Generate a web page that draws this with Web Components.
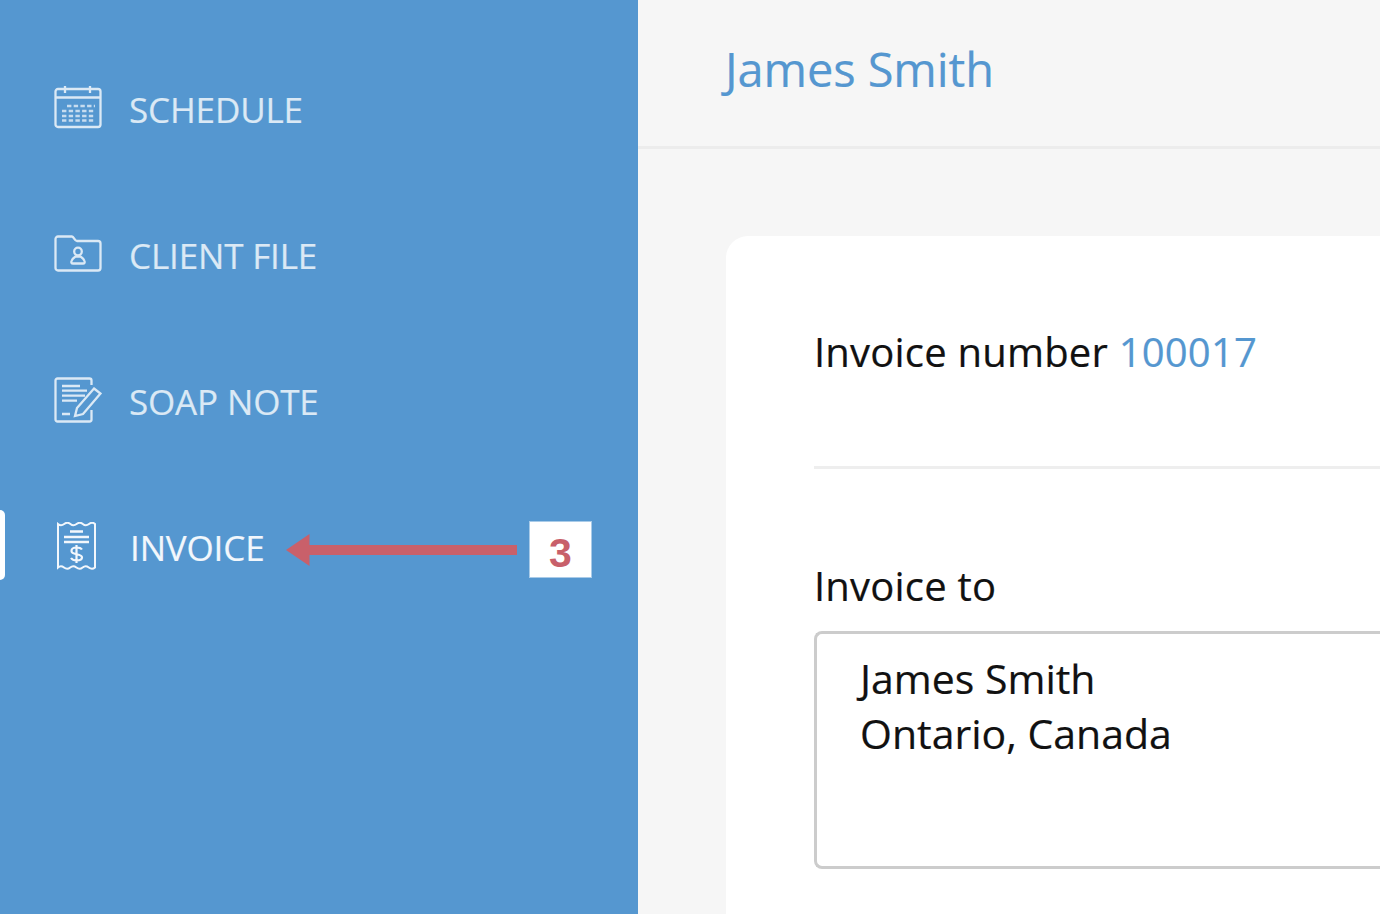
<!DOCTYPE html>
<html><head><meta charset="utf-8">
<style>
html,body{margin:0;height:100%;overflow:hidden}
body{font-family:"Open Sans",sans-serif;-webkit-text-stroke:.2px}
</style></head>
<body>
<app-shell>
  <side-nav slot="side">
    <nav-item label="SCHEDULE" icon="calendar"></nav-item>
    <nav-item label="CLIENT FILE" icon="folder"></nav-item>
    <nav-item label="SOAP NOTE" icon="note"></nav-item>
    <nav-item label="INVOICE" icon="receipt" active><call-out n="3"></call-out></nav-item>
  </side-nav>
  <page-header slot="main">James Smith</page-header>
  <invoice-card slot="main"></invoice-card>
</app-shell>
<script>
function def(name,html,init){
  customElements.define(name,class extends HTMLElement{
    constructor(){super();this.attachShadow({mode:'open'}).innerHTML=html;}
    connectedCallback(){if(init)init(this);}
  });
}
const ICONS={
calendar:`<svg width="48" height="44" viewBox="0 0 48 44" fill="none" stroke="#dbe9f5" stroke-width="2.300"><rect x="1.500" y="3" width="45" height="38" rx="2.500"/><path d="M1.500 11.500H46.500M11 0V7M36 0V7"/><g stroke-width="2.600" stroke-dasharray="4.400 2.300" opacity=".85"><path d="M13 20H41"/><path d="M8 25H41"/><path d="M8 30H41"/><path d="M8 34.500H41"/></g></svg>`,
folder:`<svg width="48" height="37" viewBox="0 0 48 37" fill="none" stroke="#dbe9f5" stroke-width="2.300"><path d="M1.500 4A2.500 2.500 0 0 1 4 1.500H18C20 1.500 20.500 6 23 6H44A2.500 2.500 0 0 1 46.500 8.500V33A2.500 2.500 0 0 1 44 35.500H4A2.500 2.500 0 0 1 1.500 33Z"/><circle cx="24" cy="16.500" r="3.800"/><path d="M19 28.500H29C30.500 28.500 31 27.500 30.500 26C30 24 28 22.500 26.500 21.500H21.500C20 22.500 18 24 17.500 26C17 27.500 17.500 28.500 19 28.500Z"/></svg>`,
note:`<svg width="48" height="46" viewBox="0 0 48 46" fill="none" stroke="#dbe9f5" stroke-width="2.300"><path d="M37.500 33V42.500A2 2 0 0 1 35.500 44.500H3.500A2 2 0 0 1 1.500 42.500V3.500A2 2 0 0 1 3.500 1.500H35.500A2 2 0 0 1 37.500 3.500V8"/><path d="M8 9H26M8 13.700H33M8 18.700H31M8 23.700H23M8 37H16"/><path d="M40 11.500L46.500 16.500L29 37L21 39L23 31Z"/></svg>`,
receipt:`<svg width="42" height="48" viewBox="0 0 42 48" fill="none" stroke="#f2f7fc" stroke-width="2.300"><path d="M3 2Q6 4.500 9.200 2T15.400 2 21.600 2 27.800 2 34 2 40 2V45.500Q37 48 33.800 45.500T27.600 45.500 21.400 45.500 15.200 45.500 9 45.500 3 45.500Z" stroke-width="2"/><path d="M15 9.500H28M9 15H34M9 20H34"/><path d="M27 27.500C26 26 24.300 25.500 21.500 25.500C18.500 25.500 16.500 26.800 16.500 29C16.500 33.500 27 31 27 35.500C27 37.500 25 38.500 21.500 38.500C19 38.500 17 37.500 16 36M21.500 23V41" stroke-width="2.200"/></svg>`
};
def('app-shell',`<style>
:host{display:grid;grid-template-columns:638px 1fr;width:1380px;height:914px;overflow:hidden;background:#f6f6f6}
.main{display:flex;flex-direction:column;min-width:0}
</style><slot name="side"></slot><div class="main"><slot name="main"></slot></div>`);
def('side-nav',`<style>
:host{display:flex;flex-direction:column;background:#5597d0;height:914px;padding-top:36px;box-sizing:border-box}
</style><slot></slot>`);
def('nav-item',`<style>
:host{display:flex;align-items:center;height:146px;position:relative;color:#dbe9f5;font-size:35px;letter-spacing:-.15px}
:host([active]){color:#f2f7fc}
.ico{width:48px;margin:-3px 28px 0 54px;display:flex;justify-content:center}
.ico svg{display:block}
:host([active]) .ico{margin-left:52px;margin-right:31px}
.t{margin-left:-1px}
.bar{display:none;position:absolute;left:0;top:36px;width:5px;height:70px;background:#fff;border-radius:0 5px 5px 0}
:host([active]) .bar{display:block}
</style><span class="bar"></span><span class="ico"></span><span class="t"></span><slot></slot>`,el=>{
  const s=el.shadowRoot;
  s.querySelector('.ico').innerHTML=ICONS[el.getAttribute('icon')];
  s.querySelector('.t').textContent=el.getAttribute('label');
});
def('call-out',`<style>
:host{position:absolute;left:286px;top:47px;display:flex;align-items:center;letter-spacing:0;-webkit-text-stroke:0}
svg{display:block}
.n{position:absolute;left:243px;top:0;width:63px;height:57px;box-sizing:border-box;background:#fff;border:1px solid #a9cbe8;color:#c8606a;font:700 41px/62px "Liberation Sans",Arial,sans-serif;text-align:center}
</style><svg width="232" height="57" viewBox="0 0 232 57"><path d="M0 29L23.500 13V24H231V34H23.500V45Z" fill="#c9606a"/></svg><span class="n"></span>`,el=>{
  el.shadowRoot.querySelector('.n').textContent=el.getAttribute('n');
});
def('page-header',`<style>
:host{display:flex;align-items:center;height:149px;padding:0 0 9px 87px;box-sizing:border-box;border-bottom:3px solid #ececec;color:#5597d0;font-size:47px;letter-spacing:-.1px}
</style><slot></slot>`);
def('invoice-card',`<style>
:host{display:block;margin:87px 0 0 88px;background:#fff;border-radius:22px 0 0 0;height:700px;padding:0 0 0 88px;color:#111;font-size:40px;letter-spacing:.2px}
.num{height:233px;box-sizing:border-box;padding-top:88px;line-height:55px;border-bottom:3px solid #eee}
.num b{font-weight:400;color:#5597d0}
.lab{margin-top:89px;line-height:55px}
.box{margin-top:18px;height:238px;box-sizing:border-box;border:3px solid #ccc;border-right:0;border-radius:8px 0 0 8px;padding:17px 0 0 43px;line-height:55px;font-size:41px;letter-spacing:0}
</style><div class="num">Invoice number <b>100017</b></div><div class="lab">Invoice to</div><div class="box">James Smith<br>Ontario, Canada</div>`);
</script>
</body></html>
